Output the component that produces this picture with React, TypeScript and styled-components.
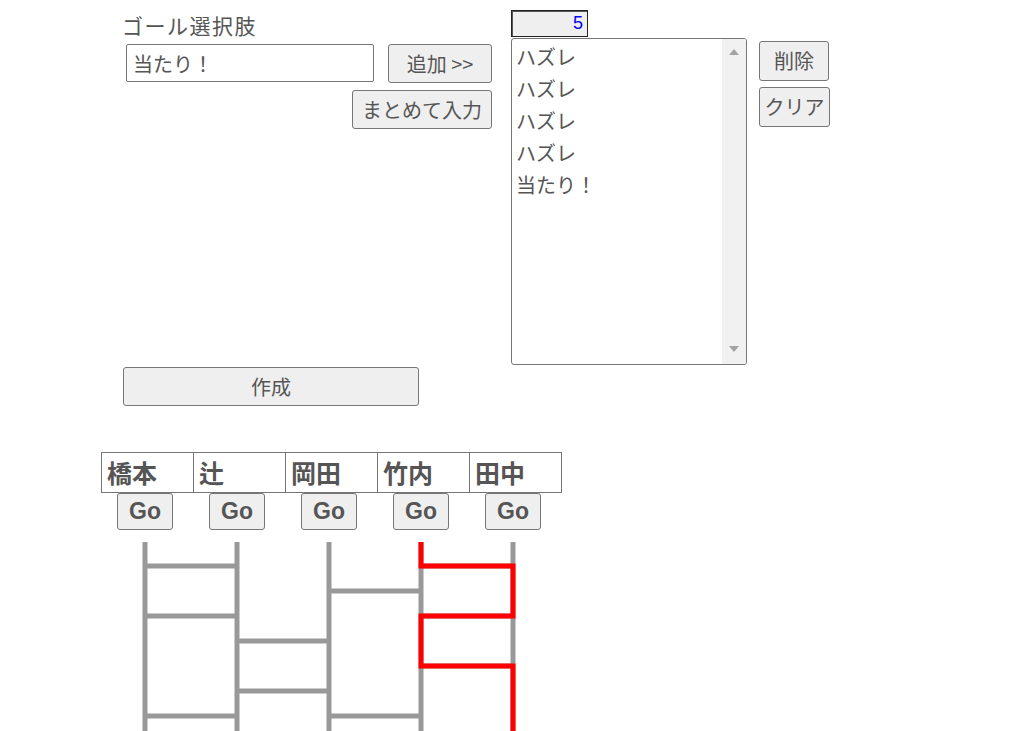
import styled, { createGlobalStyle } from "styled-components";

const GlobalStyle = createGlobalStyle`
  html, body {
    margin: 0;
    padding: 0;
    background: #fff;
  }
  body {
    font-family: "Noto Sans CJK JP", "Noto Sans", sans-serif;
    color: #555;
  }
`;

const Page = styled.div`
  padding: 10px 0 0 101px;
`;

const TopRow = styled.div`
  display: flex;
  align-items: flex-start;
`;

const GoalColumn = styled.div`
  margin-left: 21px;
  width: 370px;
  display: flex;
  flex-direction: column;
`;

const Label = styled.div`
  margin-top: 1px;
  font-size: 21px;
  letter-spacing: 1.5px;
  line-height: 28px;
`;

const InputRow = styled.div`
  margin: 5px 0 0 4px;
  display: flex;
  gap: 14px;
`;

const TextInput = styled.input`
  box-sizing: border-box;
  width: 248px;
  height: 38px;
  padding: 0 6px;
  border: 1px solid #767676;
  border-radius: 2px;
  font-family: inherit;
  font-size: 20px;
  color: #555;
  outline: none;
`;

const Button = styled.button<{ $w: number; $h?: number; $bold?: boolean }>`
  box-sizing: border-box;
  width: ${(p) => p.$w}px;
  height: ${(p) => p.$h ?? 39}px;
  padding: 0;
  background: #efefef;
  border: 1px solid #767676;
  border-radius: 3px;
  font-family: ${(p) =>
    p.$bold ? `"Liberation Sans", Arial, sans-serif` : "inherit"};
  font-weight: ${(p) => (p.$bold ? 700 : 400)};
  font-size: ${(p) => (p.$bold ? 23 : 20)}px;
  line-height: 1;
  color: #555;
  cursor: pointer;
`;

const BulkRow = styled.div`
  margin-top: 7px;
  display: flex;
  justify-content: flex-end;
`;

const ListColumn = styled.div`
  margin-left: 19px;
  display: flex;
  flex-direction: column;
`;

const CountBox = styled.div`
  box-sizing: border-box;
  width: 77px;
  height: 27px;
  padding-right: 4px;
  background: #efefef;
  border: 1px solid #222;
  box-shadow: inset 1px 1px 0 #555;
  font-family: "Liberation Sans", Arial, sans-serif;
  font-size: 18px;
  line-height: 25px;
  text-align: right;
  color: #00f;
`;

const ListBox = styled.div`
  box-sizing: border-box;
  margin-top: 1px;
  width: 236px;
  height: 327px;
  border: 1px solid #767676;
  border-radius: 3px;
  display: flex;
  overflow: hidden;
`;

const Options = styled.div`
  flex: 1;
  padding-top: 2px;
`;

const Option = styled.div`
  padding-left: 4px;
  font-size: 20px;
  line-height: 32px;
  height: 32px;
  white-space: nowrap;
`;

const ScrollTrack = styled.div`
  width: 24px;
  background: #f1f1f1;
  display: flex;
  flex-direction: column;
  justify-content: space-between;
  align-items: center;
  padding: 10px 0 12px;
`;

const Arrow = styled.div<{ $down?: boolean }>`
  width: 0;
  height: 0;
  border-left: 5px solid transparent;
  border-right: 5px solid transparent;
  ${(p) =>
    p.$down
      ? "border-top: 6px solid #a3a3a3;"
      : "border-bottom: 6px solid #a3a3a3;"}
`;

const SideColumn = styled.div`
  margin-left: 12px;
  padding-top: 31px;
  display: flex;
  flex-direction: column;
  gap: 6px;
`;

const CreateRow = styled.div`
  margin: 2px 0 0 22px;
`;

const NamesRow = styled.div`
  margin-top: 46px;
  display: flex;
`;

const Lane = styled.div`
  width: 92px;
  display: flex;
  flex-direction: column;
`;

const NameBox = styled.div`
  box-sizing: border-box;
  width: 93px;
  height: 41px;
  padding-left: 5px;
  border: 1px solid #767676;
  font-size: 25px;
  font-weight: 700;
  line-height: 39px;
  white-space: nowrap;
`;

const GoWrap = styled.div`
  padding-left: 16px;
`;

const Ladder = styled.svg`
  display: block;
  margin-top: 12px;
`;

const goals = ["ハズレ", "ハズレ", "ハズレ", "ハズレ", "当たり！"];
const names = ["橋本", "辻", "岡田", "竹内", "田中"];

const X0 = 44;
const STEP = 92;
const HEIGHT = 200;

const rungs: { from: number; y: number }[] = [
  { from: 0, y: 24 },
  { from: 0, y: 74 },
  { from: 0, y: 174 },
  { from: 1, y: 99 },
  { from: 1, y: 149 },
  { from: 2, y: 49 },
  { from: 2, y: 174 },
  { from: 3, y: 24 },
  { from: 3, y: 74 },
  { from: 3, y: 124 },
];

const lx = (i: number) => X0 + STEP * i;

const redPath = [
  `M${lx(3)} 0`,
  `V24`,
  `H${lx(4)}`,
  `V74`,
  `H${lx(3)}`,
  `V124`,
  `H${lx(4)}`,
  `V${HEIGHT}`,
].join(" ");

export default function App() {
  return (
    <>
      <GlobalStyle />
      <Page>
        <TopRow>
          <GoalColumn>
            <Label>ゴール選択肢</Label>
            <InputRow>
              <TextInput defaultValue="当たり！" />
              <Button $w={104}>追加 &gt;&gt;</Button>
            </InputRow>
            <BulkRow>
              <Button $w={140}>まとめて入力</Button>
            </BulkRow>
          </GoalColumn>
          <ListColumn>
            <CountBox>{goals.length}</CountBox>
            <ListBox>
              <Options>
                {goals.map((g, i) => (
                  <Option key={i}>{g}</Option>
                ))}
              </Options>
              <ScrollTrack>
                <Arrow />
                <Arrow $down />
              </ScrollTrack>
            </ListBox>
          </ListColumn>
          <SideColumn>
            <Button $w={70} $h={40}>
              削除
            </Button>
            <Button $w={71} $h={40}>
              クリア
            </Button>
          </SideColumn>
        </TopRow>
        <CreateRow>
          <Button $w={296}>作成</Button>
        </CreateRow>
        <NamesRow>
          {names.map((n) => (
            <Lane key={n}>
              <NameBox>{n}</NameBox>
              <GoWrap>
                <Button $w={56} $h={37} $bold>
                  Go
                </Button>
              </GoWrap>
            </Lane>
          ))}
        </NamesRow>
        <Ladder width={470} height={HEIGHT} viewBox={`0 0 470 ${HEIGHT}`}>
          {names.map((_, i) => (
            <line
              key={i}
              x1={lx(i)}
              y1={0}
              x2={lx(i)}
              y2={HEIGHT}
              stroke="#999"
              strokeWidth={5}
            />
          ))}
          {rungs.map((r, i) => (
            <line
              key={i}
              x1={lx(r.from)}
              y1={r.y}
              x2={lx(r.from + 1)}
              y2={r.y}
              stroke="#999"
              strokeWidth={5}
            />
          ))}
          <path
            d={redPath}
            fill="none"
            stroke="#f00"
            strokeWidth={5}
            strokeLinejoin="miter"
          />
        </Ladder>
      </Page>
    </>
  );
}
